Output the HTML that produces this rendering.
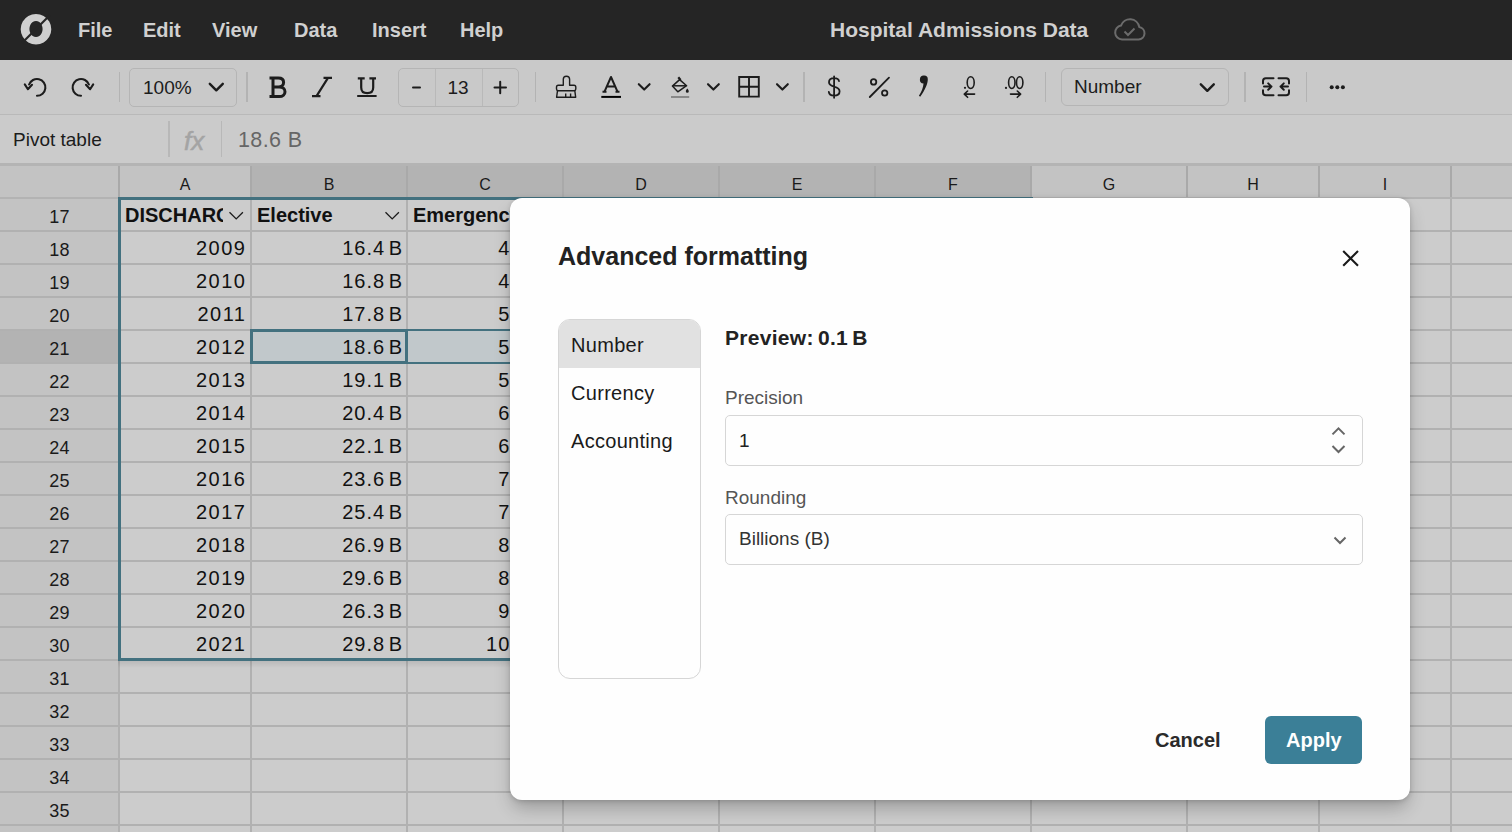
<!DOCTYPE html><html><head><meta charset="utf-8"><style>
*{box-sizing:border-box;margin:0;padding:0}
html,body{width:1512px;height:832px;overflow:hidden;background:#cccccc;font-family:"Liberation Sans",sans-serif;color:#111}
.a{position:absolute;white-space:nowrap}
#top{left:0;top:0;width:1512px;height:60px;background:#252525}
.m{position:absolute;top:17px;font-size:20px;font-weight:bold;color:#d0d0d0;line-height:26px;white-space:nowrap}
#tb{left:0;top:60px;width:1512px;height:55px;background:#c9c9c9;border-bottom:1px solid #b9b9b9}
.sep{position:absolute;top:12px;width:1px;height:30px;background:#b3b3b3}
.box{position:absolute;top:8px;height:39px;border:1px solid #b5b5b5;border-radius:5px}
.t18{font-size:19px;line-height:22px;white-space:nowrap;color:#1c1c1c}
#fb{left:0;top:115px;width:1512px;height:48px;background:#cbcbcb}
#fbsep{left:0;top:163px;width:1512px;height:3px;background:#b4b4b4}
.ch{position:absolute;top:166px;height:31px;background:#c3c3c3;text-align:center;font-size:16px;line-height:38px;color:#1a1a1a}
.ch.sel{background:#b3b3b3}
.rh{position:absolute;left:0;width:119px;background:#c3c3c3;text-align:center;font-size:18px;line-height:38px;color:#1a1a1a;letter-spacing:0.3px}
.rh.sel{background:#b3b3b3}
.vl{position:absolute;top:166px;width:2px;height:666px;background:#b1b1b1}
.hl{position:absolute;left:0;height:2px;width:1512px;background:#b1b1b1}
.c{position:absolute;height:33px;font-size:20px;line-height:35px;white-space:nowrap;overflow:hidden;color:#111;letter-spacing:1px;word-spacing:-3px}
.r{text-align:right;padding-right:4px}
.hd{font-weight:bold;padding-left:6px;letter-spacing:0}
#modal{left:510px;top:198px;width:900px;height:602px;background:#fefefe;border-radius:12px;box-shadow:0 10px 18px -2px rgba(0,0,0,0.24),0 1px 5px rgba(0,0,0,0.16)}
.md{position:absolute;white-space:nowrap;color:#222}
</style></head><body><div id="top" class="a">
<div class="m" style="left:78px">File</div>
<div class="m" style="left:143px">Edit</div>
<div class="m" style="left:212px">View</div>
<div class="m" style="left:294px">Data</div>
<div class="m" style="left:372px">Insert</div>
<div class="m" style="left:460px">Help</div>
<div class="m" style="left:830px;top:17px;font-size:21px">Hospital Admissions Data</div>
</div>
<div id="tb" class="a">
<div class="sep" style="left:119px"></div>
<div class="box" style="left:129px;width:108px"></div>
<div class="a t18" style="left:143px;top:17px">100%</div>
<div class="sep" style="left:246px;width:2px"></div>
<div class="box" style="left:398px;width:121px"></div>
<div class="sep" style="left:435px;top:9px;height:37px;background:#b9b9b9"></div>
<div class="sep" style="left:482px;top:9px;height:37px;background:#b9b9b9"></div>
<div class="a t18" style="left:447.5px;top:17px">13</div>
<div class="sep" style="left:535px"></div>
<div class="sep" style="left:803px;width:2px"></div>
<div class="sep" style="left:1045px"></div>
<div class="box" style="left:1061px;width:168px;height:38px;border-radius:6px"></div>
<div class="a t18" style="left:1074px;top:16px">Number</div>
<div class="sep" style="left:1244px;width:2px"></div>
<div class="sep" style="left:1306px"></div>
</div>
<div id="fb" class="a">
<div class="a t18" style="left:13px;top:14px">Pivot table</div>
<div class="sep" style="left:168px;top:6px;height:36px;width:2px;background:#b8b8b8"></div>
<div class="a" style="left:184px;top:11px;font-size:26px;line-height:30px;font-style:italic;color:#a4a4a4;-webkit-text-stroke:0.5px #a4a4a4">fx</div>
<div class="sep" style="left:221px;top:6px;height:36px;background:#b8b8b8"></div>
<div class="a" style="left:238px;top:13px;font-size:21.5px;line-height:24px;color:#666;letter-spacing:0.4px">18.6 B</div>
</div>
<div id="fbsep" class="a"></div>
<div class="a" style="left:0;top:166px;width:119px;height:32px;background:#c3c3c3"></div>
<div class="ch" style="left:119px;width:132px">A</div>
<div class="ch sel" style="left:251px;width:156px">B</div>
<div class="ch sel" style="left:407px;width:156px">C</div>
<div class="ch sel" style="left:563px;width:156px">D</div>
<div class="ch sel" style="left:719px;width:156px">E</div>
<div class="ch sel" style="left:875px;width:156px">F</div>
<div class="ch" style="left:1031px;width:156px">G</div>
<div class="ch" style="left:1187px;width:132px">H</div>
<div class="ch" style="left:1319px;width:132px">I</div>
<div class="ch" style="left:1451px;width:132px">J</div>
<div class="rh" style="top:198px;height:33px">17</div>
<div class="rh" style="top:231px;height:33px">18</div>
<div class="rh" style="top:264px;height:33px">19</div>
<div class="rh" style="top:297px;height:33px">20</div>
<div class="rh sel" style="top:330px;height:33px">21</div>
<div class="rh" style="top:363px;height:33px">22</div>
<div class="rh" style="top:396px;height:33px">23</div>
<div class="rh" style="top:429px;height:33px">24</div>
<div class="rh" style="top:462px;height:33px">25</div>
<div class="rh" style="top:495px;height:33px">26</div>
<div class="rh" style="top:528px;height:33px">27</div>
<div class="rh" style="top:561px;height:33px">28</div>
<div class="rh" style="top:594px;height:33px">29</div>
<div class="rh" style="top:627px;height:33px">30</div>
<div class="rh" style="top:660px;height:33px">31</div>
<div class="rh" style="top:693px;height:33px">32</div>
<div class="rh" style="top:726px;height:33px">33</div>
<div class="rh" style="top:759px;height:33px">34</div>
<div class="rh" style="top:792px;height:33px">35</div>
<div class="rh" style="top:825px;height:33px">36</div>
<div class="a" style="left:251px;top:330px;width:780px;height:33px;background:#c1c8cb"></div>
<div class="vl" style="left:118px"></div>
<div class="vl" style="left:250px"></div>
<div class="vl" style="left:406px"></div>
<div class="vl" style="left:562px"></div>
<div class="vl" style="left:718px"></div>
<div class="vl" style="left:874px"></div>
<div class="vl" style="left:1030px"></div>
<div class="vl" style="left:1186px"></div>
<div class="vl" style="left:1318px"></div>
<div class="vl" style="left:1450px"></div>
<div class="vl" style="left:1582px"></div>
<div class="hl" style="top:197px;height:2px;background:#b3b3b3"></div>
<div class="a" style="left:118px;top:166px;width:2px;height:31px;background:#a9a9a9"></div>
<div class="a" style="left:250px;top:166px;width:2px;height:31px;background:#a9a9a9"></div>
<div class="a" style="left:406px;top:166px;width:2px;height:31px;background:#a9a9a9"></div>
<div class="a" style="left:562px;top:166px;width:2px;height:31px;background:#a9a9a9"></div>
<div class="a" style="left:718px;top:166px;width:2px;height:31px;background:#a9a9a9"></div>
<div class="a" style="left:874px;top:166px;width:2px;height:31px;background:#a9a9a9"></div>
<div class="a" style="left:1030px;top:166px;width:2px;height:31px;background:#a9a9a9"></div>
<div class="a" style="left:1186px;top:166px;width:2px;height:31px;background:#a9a9a9"></div>
<div class="a" style="left:1318px;top:166px;width:2px;height:31px;background:#a9a9a9"></div>
<div class="a" style="left:1450px;top:166px;width:2px;height:31px;background:#a9a9a9"></div>
<div class="a" style="left:1582px;top:166px;width:2px;height:31px;background:#a9a9a9"></div>
<div class="hl" style="top:230px"></div>
<div class="hl" style="top:263px"></div>
<div class="hl" style="top:296px"></div>
<div class="hl" style="top:329px"></div>
<div class="hl" style="top:362px"></div>
<div class="hl" style="top:395px"></div>
<div class="hl" style="top:428px"></div>
<div class="hl" style="top:461px"></div>
<div class="hl" style="top:494px"></div>
<div class="hl" style="top:527px"></div>
<div class="hl" style="top:560px"></div>
<div class="hl" style="top:593px"></div>
<div class="hl" style="top:626px"></div>
<div class="hl" style="top:659px"></div>
<div class="hl" style="top:692px"></div>
<div class="hl" style="top:725px"></div>
<div class="hl" style="top:758px"></div>
<div class="hl" style="top:791px"></div>
<div class="hl" style="top:824px"></div>
<div class="c hd" style="left:119px;top:198px;width:104px">DISCHARGE</div>
<div class="c hd" style="left:251px;top:198px;width:134px">Elective</div>
<div class="c hd" style="left:407px;top:198px;width:150px">Emergency</div>
<div class="c r" style="left:119px;top:231px;width:132px;letter-spacing:1.5px;padding-right:4.6px">2009</div>
<div class="c r" style="left:251px;top:231px;width:156px">16.4 B</div>
<div class="c r" style="left:407px;top:231px;width:156px">45.2 B</div>
<div class="c r" style="left:119px;top:264px;width:132px;letter-spacing:1.5px;padding-right:4.6px">2010</div>
<div class="c r" style="left:251px;top:264px;width:156px">16.8 B</div>
<div class="c r" style="left:407px;top:264px;width:156px">48.1 B</div>
<div class="c r" style="left:119px;top:297px;width:132px;letter-spacing:1.5px;padding-right:4.6px">2011</div>
<div class="c r" style="left:251px;top:297px;width:156px">17.8 B</div>
<div class="c r" style="left:407px;top:297px;width:156px">52.3 B</div>
<div class="c r" style="left:119px;top:330px;width:132px;letter-spacing:1.5px;padding-right:4.6px">2012</div>
<div class="c r" style="left:251px;top:330px;width:156px">18.6 B</div>
<div class="c r" style="left:407px;top:330px;width:156px">55.0 B</div>
<div class="c r" style="left:119px;top:363px;width:132px;letter-spacing:1.5px;padding-right:4.6px">2013</div>
<div class="c r" style="left:251px;top:363px;width:156px">19.1 B</div>
<div class="c r" style="left:407px;top:363px;width:156px">58.7 B</div>
<div class="c r" style="left:119px;top:396px;width:132px;letter-spacing:1.5px;padding-right:4.6px">2014</div>
<div class="c r" style="left:251px;top:396px;width:156px">20.4 B</div>
<div class="c r" style="left:407px;top:396px;width:156px">61.2 B</div>
<div class="c r" style="left:119px;top:429px;width:132px;letter-spacing:1.5px;padding-right:4.6px">2015</div>
<div class="c r" style="left:251px;top:429px;width:156px">22.1 B</div>
<div class="c r" style="left:407px;top:429px;width:156px">66.4 B</div>
<div class="c r" style="left:119px;top:462px;width:132px;letter-spacing:1.5px;padding-right:4.6px">2016</div>
<div class="c r" style="left:251px;top:462px;width:156px">23.6 B</div>
<div class="c r" style="left:407px;top:462px;width:156px">70.9 B</div>
<div class="c r" style="left:119px;top:495px;width:132px;letter-spacing:1.5px;padding-right:4.6px">2017</div>
<div class="c r" style="left:251px;top:495px;width:156px">25.4 B</div>
<div class="c r" style="left:407px;top:495px;width:156px">74.3 B</div>
<div class="c r" style="left:119px;top:528px;width:132px;letter-spacing:1.5px;padding-right:4.6px">2018</div>
<div class="c r" style="left:251px;top:528px;width:156px">26.9 B</div>
<div class="c r" style="left:407px;top:528px;width:156px">81.5 B</div>
<div class="c r" style="left:119px;top:561px;width:132px;letter-spacing:1.5px;padding-right:4.6px">2019</div>
<div class="c r" style="left:251px;top:561px;width:156px">29.6 B</div>
<div class="c r" style="left:407px;top:561px;width:156px">86.2 B</div>
<div class="c r" style="left:119px;top:594px;width:132px;letter-spacing:1.5px;padding-right:4.6px">2020</div>
<div class="c r" style="left:251px;top:594px;width:156px">26.3 B</div>
<div class="c r" style="left:407px;top:594px;width:156px">92.8 B</div>
<div class="c r" style="left:119px;top:627px;width:132px;letter-spacing:1.5px;padding-right:4.6px">2021</div>
<div class="c r" style="left:251px;top:627px;width:156px">29.8 B</div>
<div class="c r" style="left:407px;top:627px;width:156px">100.4 B</div>
<div class="a" style="left:118px;top:661px;width:915px;height:7px;background:linear-gradient(rgba(0,0,0,0.09),rgba(0,0,0,0))"></div>
<div class="a" style="left:118px;top:197px;width:915px;height:464px;border:3px solid #43717f"></div>
<div class="a" style="left:250px;top:329px;width:782px;height:35px;border:2px solid #43717f"></div>
<div class="a" style="left:250px;top:329px;width:158px;height:35px;border:3px solid #43717f"></div>
<div id="modal" class="a">
</div>
<div class="md" style="left:558px;top:241px;font-size:25px;line-height:30px;font-weight:bold">Advanced formatting</div>
<div class="a" style="left:558px;top:319px;width:143px;height:360px;border:1px solid #d6d6d6;border-radius:12px;overflow:hidden;background:#fefefe"><div style="position:absolute;left:0;top:0;width:143px;height:48px;background:#e1e1e1"></div></div>
<div class="md" style="left:571px;top:334px;font-size:20px;line-height:22px;color:#1a1a1a;letter-spacing:0.3px">Number</div>
<div class="md" style="left:571px;top:382px;font-size:20px;line-height:22px;color:#1a1a1a;letter-spacing:0.3px">Currency</div>
<div class="md" style="left:571px;top:430px;font-size:20px;line-height:22px;color:#1a1a1a;letter-spacing:0.3px">Accounting</div>
<div class="md" style="left:725px;top:326px;font-size:21px;line-height:24px;font-weight:bold;letter-spacing:0.3px;word-spacing:-2px">Preview: 0.1 B</div>
<div class="md" style="left:725px;top:387px;font-size:19px;line-height:22px;color:#555">Precision</div>
<div class="a" style="left:725px;top:415px;width:638px;height:51px;border:1px solid #d6d6d6;border-radius:5px"></div>
<div class="md" style="left:739px;top:430px;font-size:19px;line-height:22px;color:#222">1</div>
<div class="md" style="left:725px;top:487px;font-size:19px;line-height:22px;color:#555">Rounding</div>
<div class="a" style="left:725px;top:514px;width:638px;height:51px;border:1px solid #d6d6d6;border-radius:5px"></div>
<div class="md" style="left:739px;top:528px;font-size:19px;line-height:22px;color:#333">Billions (B)</div>
<div class="md" style="left:1155px;top:728px;font-size:20px;line-height:24px;font-weight:bold;color:#2b2b2b">Cancel</div>
<div class="a" style="left:1265px;top:716px;width:97px;height:48px;background:#3b7f97;border-radius:6px"></div>
<div class="md" style="left:1286px;top:728px;font-size:20px;line-height:24px;font-weight:bold;color:#fff">Apply</div>
<svg class="a" style="left:0;top:0" width="1512" height="832" viewBox="0 0 1512 832">
<g>
<path fill="#cfcfcf" fill-rule="evenodd" d="M36 13.9a15.3 15.3 0 1 1 -0.01 0Z M36 20.9a6.6 8.1 0 1 0 0.01 0Z"/>
<line x1="22" y1="43" x2="50" y2="15" stroke="#252525" stroke-width="2.2"/>
</g>
<path d="M1122 39.5h16.5a6.3 6.3 0 0 0 0.8-12.5a9.5 9.5 0 0 0-18.3-1.4a7 7 0 0 0 1 13.9Z" fill="none" stroke="#6b6b6b" stroke-width="2"/>
<path d="M1124.5 31.5l3.5 3.5l6.5-6.5" fill="none" stroke="#6b6b6b" stroke-width="2"/>
<g fill="none" stroke="#1c1c1c" stroke-width="2.1" stroke-linecap="round" stroke-linejoin="round">
<path d="M37 95.8A8.4 8.4 0 1 0 29.1 84.5"/>
<path d="M24.8 84.4L27.9 89.2L32 84.8"/>
<path d="M81 95.8A8.4 8.4 0 1 1 88.9 84.5"/>
<path d="M93.2 84.4L90.1 89.2L86 84.8"/>

<path d="M638.8 84.2l5.4 5.4l5.4-5.4"/>
<path d="M708 84.2l5.4 5.4l5.4-5.4"/>
<path d="M777 84.2l5.4 5.4l5.4-5.4"/>
</g>
<g fill="none" stroke="#1c1c1c" stroke-width="3" stroke-linejoin="round">
<path d="M269.5 78H278.3C282.3 78 283.6 80.3 283.6 82.4C283.6 84.8 281.8 86.9 278.3 86.9H273M273 78V96.6M273 86.9H279.2C283 86.9 285 89.2 285 91.7C285 94.3 283 96.6 279.2 96.6H269.5"/>
</g>
<g fill="none" stroke="#1c1c1c" stroke-width="2.2" stroke-linecap="butt">
<path d="M323.5 77.8H332M328 77.8L316.5 96.2M312 96.2H320.5"/>
<path d="M357.8 78.3H364.7M369.4 78.3H376M361.2 78.3V87.5C361.2 91.3 363.7 93.2 367.2 93.2C370.7 93.2 373.2 91.3 373.2 87.5V78.3M357.2 96H376.6"/>
</g>
<g fill="none" stroke="#1c1c1c" stroke-width="2" stroke-linecap="round">
<path d="M413 87.5H420"/>
<path d="M494.5 87.5H506M500.2 81.8V93.2"/>
</g>
<g fill="none" stroke="#1c1c1c" stroke-width="1.4" stroke-linejoin="round">
<path d="M563.3 85.3V79.3C563.3 77.3 564.8 76.2 566.4 76.2C568 76.2 569.6 77.3 569.6 79.3V85.3H574C575.2 85.3 575.8 86.2 575.8 87.2V89C575.8 90 575.2 90.7 574 90.7H558.3C557.1 90.7 556.5 90 556.5 89V87.2C556.5 86.2 557.1 85.3 558.3 85.3Z"/>
<path d="M557.5 90.7L556.6 97.3H575.7L574.8 90.7"/>
<path d="M565.7 93.5V97.3M570.6 93.5V97.3"/>
</g>
<g fill="none" stroke="#1c1c1c" stroke-width="2" stroke-linejoin="round">
<path d="M604.4 91.8L611 77L617.6 91.8M606.8 86.4H615.2"/>
<path d="M602.5 91.8H606.5M615.5 91.8H619.5"/>
</g>
<path d="M601.3 96.9H621" stroke="#000" stroke-width="2"/>
<g fill="none" stroke="#1c1c1c" stroke-width="1.5" stroke-linejoin="round">
<path d="M672.4 86.1L679.6 79.6L686.6 85.7L677.8 91.8Z"/>
<path d="M672.8 85.8H686.2"/>
<path d="M678.3 77.3L680.6 80" stroke-width="2.2"/>
</g>
<path d="M687.3 88.6c0.9 1.2 1.5 2 1.5 2.7a1.5 1.5 0 0 1-3 0c0-0.7 0.6-1.5 1.5-2.7Z" fill="#1c1c1c"/>
<path d="M671 97H689.2" stroke="#888" stroke-width="2"/>
<g fill="none" stroke="#1c1c1c" stroke-width="1.9">
<path d="M739.2 77H758.8V96.6H739.2Z M749 77V96.6 M739.2 86.8H758.8"/>
</g>
<g fill="none" stroke="#1c1c1c" stroke-width="1.8" stroke-linecap="round">
<path d="M839 81.2C838.6 79.1 836.8 78.2 834.2 78.2C831 78.2 829 79.8 829 82.3C829 85 831.4 85.9 834 86.6C837 87.4 839.6 88.3 839.6 91.3C839.6 94 837.3 95.6 834.1 95.6C831 95.6 829.1 94.2 828.8 91.8M834.1 76.3V97.8"/>
<path d="M869.8 97L889 77.6"/>
</g>
<g fill="none" stroke="#1c1c1c" stroke-width="1.8">
<circle cx="873.6" cy="81.9" r="2.7"/>
<circle cx="884.7" cy="93" r="2.7"/>
</g>
<path d="M924.2 75.6a3.6 3.6 0 0 1 3.6 3.6c0 4.5-2.6 10.6-7.6 17.5l-1.3-0.9c2.6-4.1 4.4-8.2 4.6-12.3a3.6 3.6 0 0 1 0.7-7.9Z" fill="#1c1c1c"/>
<g fill="none" stroke="#1c1c1c" stroke-width="1.6" stroke-linecap="round" stroke-linejoin="round">
<ellipse cx="970.7" cy="82.6" rx="3.5" ry="5.9"/>
<path d="M964.3 94.1H974.6M967.6 91L964.3 94.1L967.6 97.3"/>
<ellipse cx="1011.8" cy="82.6" rx="3.2" ry="5.9"/>
<ellipse cx="1019.7" cy="82.6" rx="3.2" ry="5.9"/>
<path d="M1010.5 94.1H1020.6M1017.3 91L1020.6 94.1L1017.3 97.3"/>
</g>
<circle cx="965" cy="87.8" r="1.1" fill="#1c1c1c"/>
<circle cx="1006" cy="87.9" r="1.1" fill="#1c1c1c"/>
<g fill="none" stroke="#1c1c1c" stroke-width="2" stroke-linecap="round" stroke-linejoin="round">
<path d="M1273.5 78.3H1265.8C1264.1 78.3 1263 79.4 1263 81.1V83.4M1263 90.2V92.5C1263 94.2 1264.1 95.3 1265.8 95.3H1273.5"/>
<path d="M1278.5 78.3H1286.2C1287.9 78.3 1289 79.4 1289 81.1V83.4M1289 90.2V92.5C1289 94.2 1287.9 95.3 1286.2 95.3H1278.5"/>
<path d="M1264 86.6H1271.5M1268.2 83.4L1271.5 86.6L1268.2 89.8"/>
<path d="M1288 86.6H1280.5M1283.8 83.4L1280.5 86.6L1283.8 89.8"/>
</g>
<g fill="#1c1c1c"><circle cx="1331.7" cy="87.2" r="2"/><circle cx="1337.3" cy="87.2" r="2"/><circle cx="1342.9" cy="87.2" r="2"/></g>
<g fill="none" stroke="#1c1c1c" stroke-width="2.4" stroke-linecap="round" stroke-linejoin="round">
<path d="M209.8 83.8l6.5 6.5l6.5-6.5"/>
<path d="M1200.8 84.3l6.5 6.5l6.5-6.5"/>
</g>
<g fill="none" stroke="#1a1a1a" stroke-width="1.3">
<path d="M229.5 212.2l6.7 6.7l6.7-6.7"/>
<path d="M385.5 212.2l6.7 6.7l6.7-6.7"/>
</g>
<g fill="none" stroke="#1a1a1a" stroke-width="2.1">
<path d="M1343.2 251L1358 265.8M1358 251L1343.2 265.8"/>
</g>
<g fill="none" stroke="#666" stroke-width="2">
<path d="M1332.5 434.4l6-6l6 6"/>
<path d="M1332.5 446l6 6l6-6"/>
<path d="M1334.5 537.5l5.5 5.5l5.5-5.5"/>
</g>
</svg></body></html>
